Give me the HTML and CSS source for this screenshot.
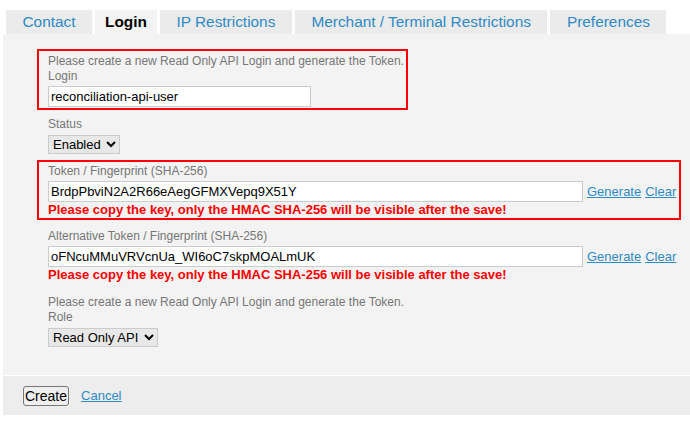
FILE: index.html
```html
<!DOCTYPE html>
<html>
<head>
<meta charset="utf-8">
<link rel="stylesheet" href="styles.css">
</head>
<body>
<div class="tabs">
  <div class="tab">Contact</div>
  <div class="tab tab--active">Login</div>
  <div class="tab">IP Restrictions</div>
  <div class="tab">Merchant / Terminal Restrictions</div>
  <div class="tab">Preferences</div>
</div>
<div class="panel">
  <div class="group group--hl group--narrow group--first">
    <div class="label">Please create a new Read Only API Login and generate the Token.</div>
    <div class="label">Login</div>
    <input class="field field--short" type="text" value="reconciliation-api-user">
  </div>
  <div class="group group--tight">
    <div class="label">Status</div>
    <select class="select"><option>Enabled</option></select>
  </div>
  <div class="group group--hl group--tight">
    <div class="label">Token / Fingerprint (SHA-256)</div>
    <div class="row">
      <input class="field field--long" type="text" value="BrdpPbviN2A2R66eAegGFMXVepq9X51Y">
      <a class="link" href="#">Generate</a>
      <a class="link" href="#">Clear</a>
    </div>
    <div class="warn">Please copy the key, only the HMAC SHA-256 will be visible after the save!</div>
  </div>
  <div class="group group--loose">
    <div class="label">Alternative Token / Fingerprint (SHA-256)</div>
    <div class="row">
      <input class="field field--long" type="text" value="oFNcuMMuVRVcnUa_WI6oC7skpMOALmUK">
      <a class="link" href="#">Generate</a>
      <a class="link" href="#">Clear</a>
    </div>
    <div class="warn">Please copy the key, only the HMAC SHA-256 will be visible after the save!</div>
  </div>
  <div class="group group--role">
    <div class="label">Please create a new Read Only API Login and generate the Token.</div>
    <div class="label">Role</div>
    <select class="select"><option>Read Only API</option></select>
  </div>
</div>
<div class="footer">
  <button class="btn" type="button">Create</button>
  <a class="link link--cancel" href="#">Cancel</a>
</div>
</body>
</html>
```

FILE: styles.css
```css
html, body {
  margin: 0;
  padding: 0;
  background: #ffffff;
}
body {
  font-family: "Liberation Sans", Arial, sans-serif;
  color: #000;
}
.tabs {
  display: flex;
  gap: 3px;
  margin: 10px 0 0 6px;
  height: 24px;
}
.tab {
  height: 24px;
  line-height: 24px;
  padding: 0 16.5px;
  font-size: 15.4px;
  color: #2f8ac6;
  background: #ebebeb;
  white-space: nowrap;
}
.tab--active {
  padding: 0 10px;
  background: #f3f3f3;
  color: #000;
  font-weight: bold;
}
.panel {
  margin-left: 3px;
  height: 341px;
  box-sizing: border-box;
  background: #f3f3f3;
  padding: 15px 9px 0 34px;
}
.group {
  border: 2px solid transparent;
  padding: 2px 4px 1px 9px;
}
.group--hl {
  border-color: #ff0000;
}
.group--narrow {
  width: 371px;
  box-sizing: border-box;
}
.group--first {
  padding-top: 3px;
}
.group--tight {
  margin-top: 3px;
}
.group--loose {
  margin-top: 5px;
}
.group--role {
  margin-top: 6px;
}
.label {
  font-size: 12px;
  line-height: 15px;
  color: #767676;
  white-space: nowrap;
}
.field {
  display: block;
  box-sizing: border-box;
  height: 21px;
  margin: 2px 0 0;
  padding: 0 2px;
  border: 1px solid #cccccc;
  background: #fff;
  font-family: "Liberation Sans", Arial, sans-serif;
  font-size: 13px;
  color: #000;
  outline: none;
}
.field--short {
  width: 263px;
}
.field--long {
  width: 535px;
  flex-shrink: 0;
}
.row {
  display: flex;
  align-items: center;
  gap: 4px;
  margin-top: 2px;
  white-space: nowrap;
}
.row .field {
  margin: 0;
}
.link {
  font-size: 13px;
  color: #2f8ac6;
  text-decoration: underline;
}
.warn {
  font-size: 13px;
  line-height: 15px;
  font-weight: bold;
  color: #ff0000;
  white-space: nowrap;
}
.select {
  display: block;
  margin-top: 3px;
  height: 19px;
  padding-right: 2px;
  font-family: "Liberation Sans", Arial, sans-serif;
  font-size: 13px;
  color: #000;
  background-color: #e8e8e8;
  border: 1px solid #cccccc;
  border-radius: 0;
}
.footer {
  margin: 1px 0 0 3px;
  height: 39px;
  box-sizing: border-box;
  background: #ededed;
  padding: 10px 20px;
  display: flex;
  align-items: center;
  gap: 12px;
}
.btn {
  height: 20px;
  padding: 0 1px;
  font-family: "Liberation Sans", Arial, sans-serif;
  font-size: 14px;
  color: #000;
  background: #efefef;
  border: 1px solid #767676;
  border-radius: 3px;
}
.link--cancel {
  font-size: 13px;
}
```
